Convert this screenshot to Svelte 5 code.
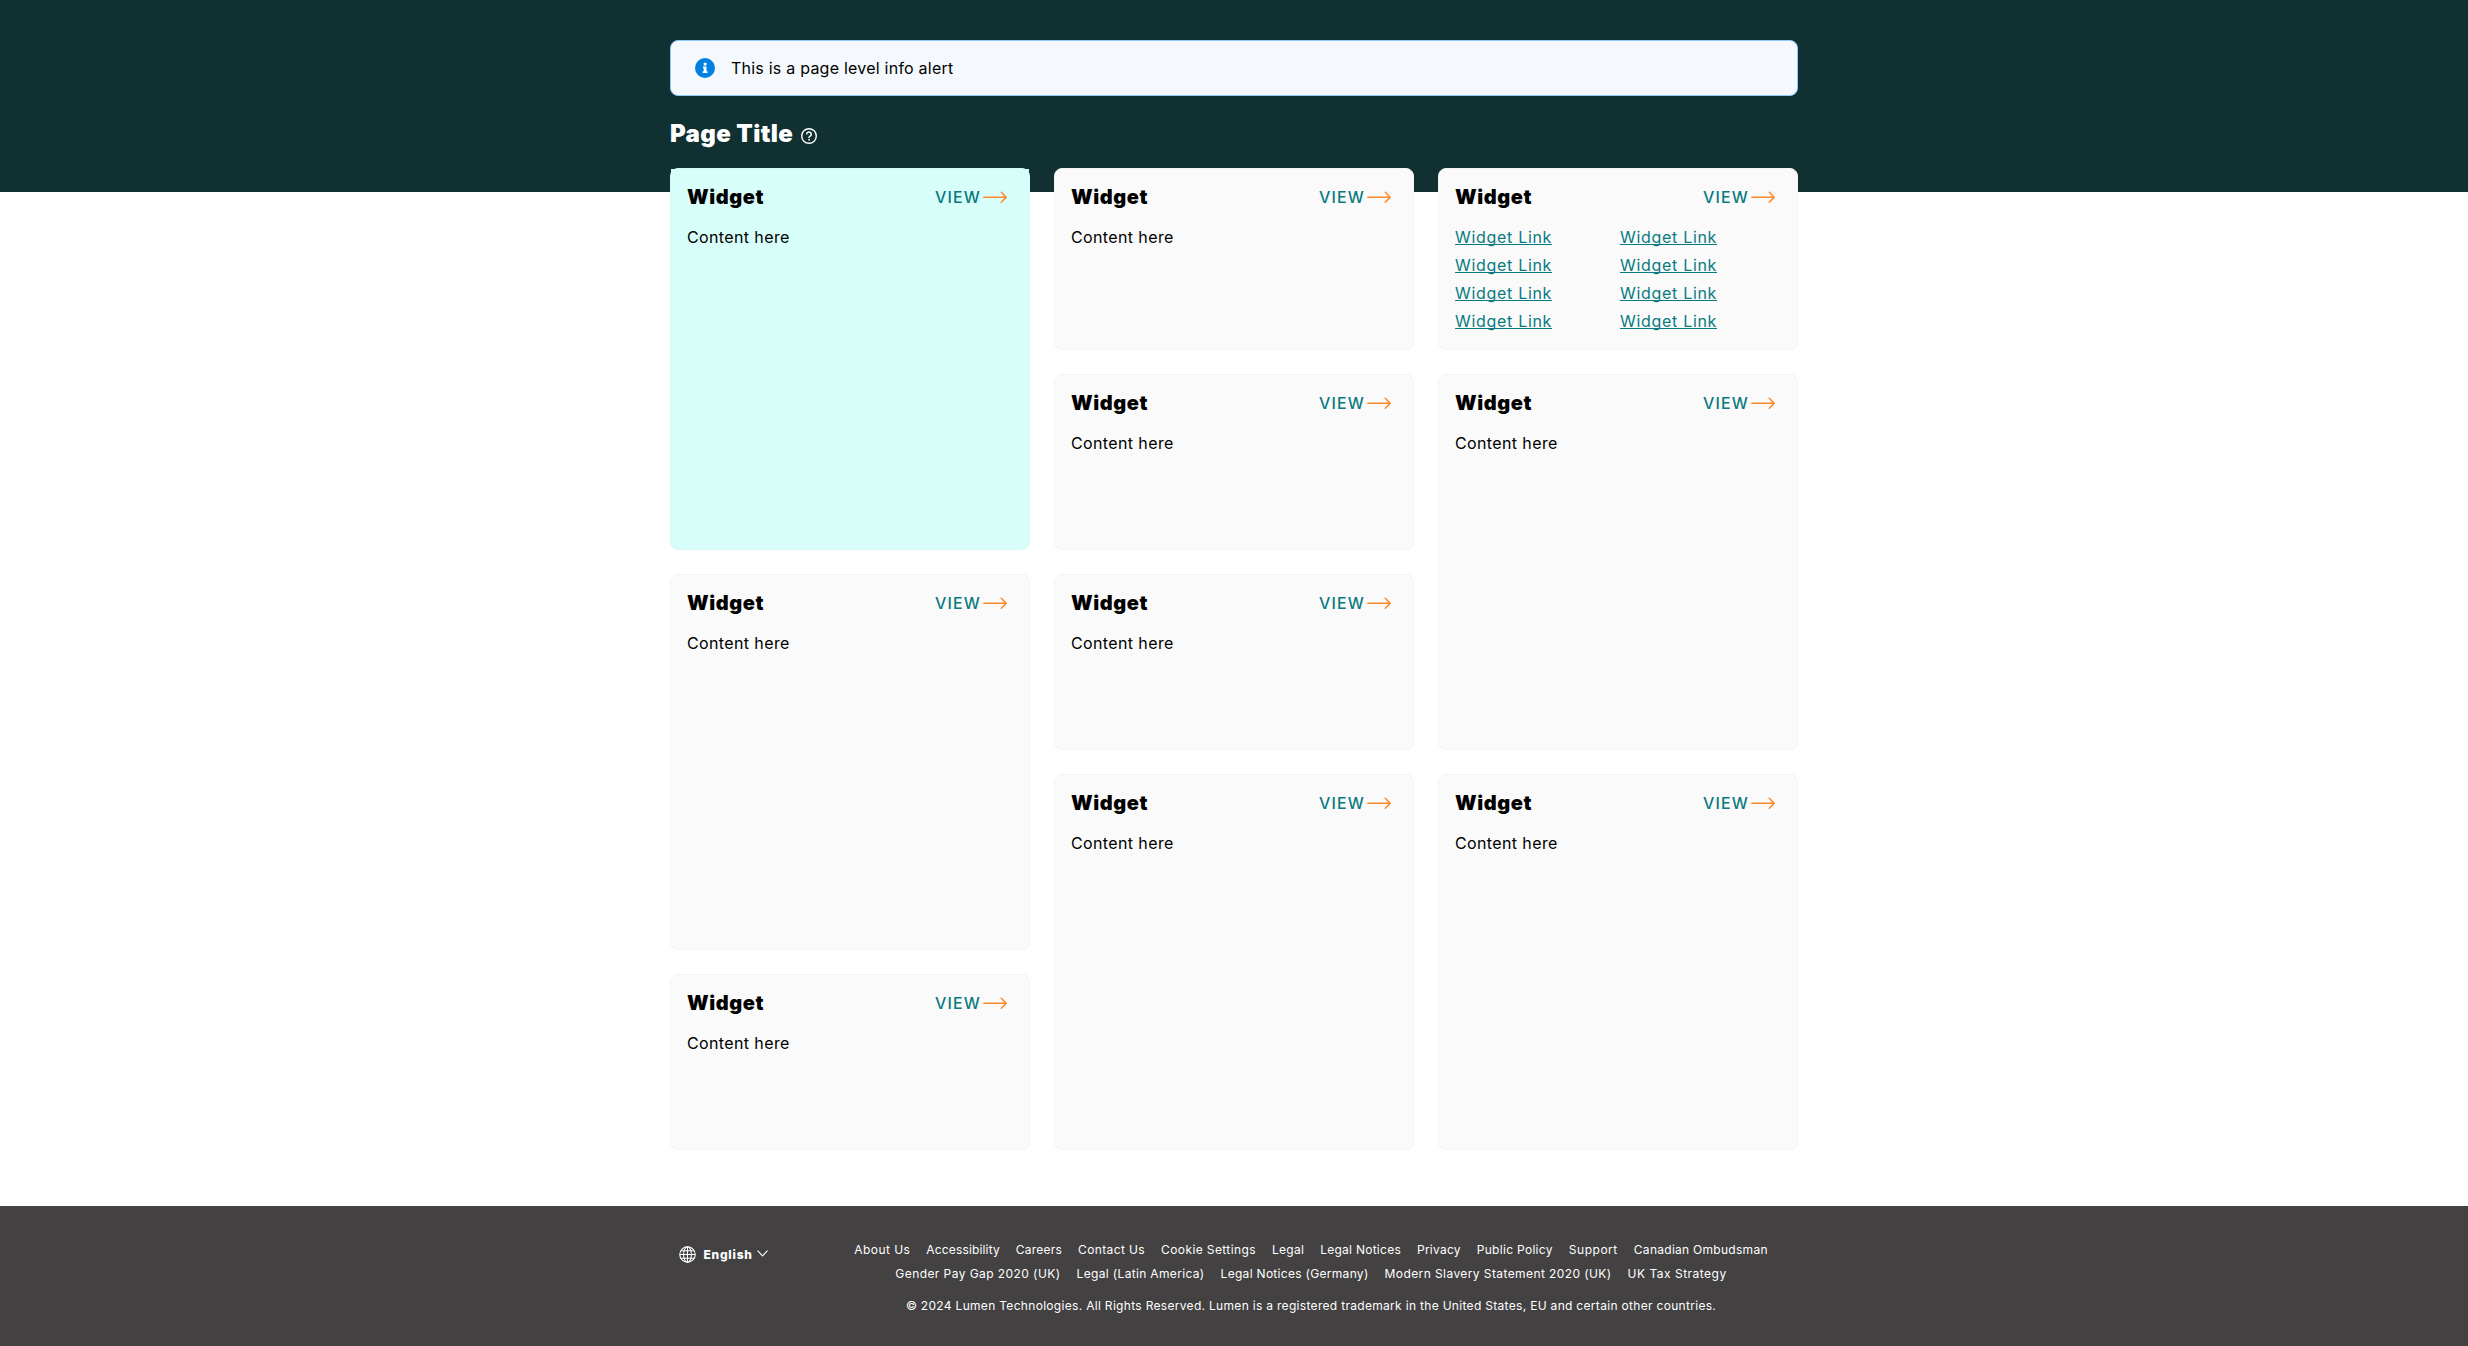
<script>
  const widgetLinks = Array.from({ length: 8 }, () => 'Widget Link');

  const columns = [
    [{ size: 'feature' }, { size: 'tall' }, { size: 'short' }],
    [{ size: 'top' }, { size: 'short' }, { size: 'short' }, { size: 'tall' }],
    [{ size: 'top', links: widgetLinks }, { size: 'tall' }, { size: 'tall' }]
  ];

  // label and its tracking in px
  const footerLinks = [
    ['About Us', 0.46],
    ['Accessibility', 0.15],
    ['Careers', 0.21],
    ['Contact Us', 0.39],
    ['Cookie Settings', 0.39],
    ['Legal', 0.3],
    ['Legal Notices', 0.26],
    ['Privacy', 0.24],
    ['Public Policy', 0.3],
    ['Support', 0.53],
    ['Canadian Ombudsman', 0.28],
    ['Gender Pay Gap 2020 (UK)', 0.43],
    ['Legal (Latin America)', 0.34],
    ['Legal Notices (Germany)', 0.3],
    ['Modern Slavery Statement 2020 (UK)', 0.41],
    ['UK Tax Strategy', 0.49]
  ];
</script>

<div class="page">
  <header class="banner">
    <div class="container">
      <div class="alert" role="status">
        <svg class="info" viewBox="0 0 20 20" width="20" height="20" aria-hidden="true">
          <circle cx="10" cy="10" r="10" fill="#0280e1" />
          <circle cx="10.1" cy="6.1" r="1.6" fill="#fff" />
          <path d="M8 8.5h3.5v4.7h1v1.7H7.7v-1.7h1V10.2H8z" fill="#fff" />
        </svg>
        <span>This is a page level info alert</span>
      </div>
      <div class="title-row">
        <h1>Page Title</h1>
        <svg class="help" viewBox="0 0 16 16" width="16" height="16" fill="none" stroke="#fff" aria-hidden="true">
          <circle cx="8" cy="8" r="7.3" stroke-width="1.4" />
          <path d="M5.7 6.4a2.3 2.2 0 1 1 3.7 1.6C8.6 8.6 8 8.9 8 9.9" stroke-width="1.5" />
          <path d="M8 11v1.6" stroke-width="1.6" />
        </svg>
      </div>
    </div>
  </header>

  <main class="container board">
    {#each columns as column}
      <div class="column">
        {#each column as widget}
          <section class="card {widget.size}">
            <div class="card-body">
              <div class="card-head">
                <h2>Widget</h2>
                <a class="view" href="#view">
                  <span>VIEW</span>
                  <svg viewBox="0 0 24 12" width="24" height="12" fill="none" stroke="#ff8a2c" stroke-width="1.5" stroke-linecap="round" stroke-linejoin="round" aria-hidden="true">
                    <path d="M.8 6.3h22.3M18.3 1.2l4.9 5.1-4.9 5" />
                  </svg>
                </a>
              </div>
              {#if widget.links}
                <div class="links">
                  {#each widget.links as link}
                    <a href="#link">{link}</a>
                  {/each}
                </div>
              {:else}
                <p>Content here</p>
              {/if}
            </div>
          </section>
        {/each}
      </div>
    {/each}
  </main>

  <footer>
    <div class="container footer-grid">
      <button class="language" type="button">
        <svg viewBox="0 0 16 16" width="17" height="17" fill="none" stroke="#fff" stroke-width="1" aria-hidden="true">
          <circle cx="8" cy="8" r="7.3" />
          <ellipse cx="8" cy="8" rx="3.7" ry="7.3" />
          <path d="M8 .7v14.6M.7 8h14.6M1.8 4.4h12.4M1.8 11.6h12.4" />
        </svg>
        <span>English</span>
        <svg class="chevron" viewBox="0 0 11 7" width="11" height="7" fill="none" stroke="#fff" stroke-width="1.1" stroke-linecap="round" aria-hidden="true">
          <path d="M.8 .9l4.7 5 4.7-5" />
        </svg>
      </button>
      <div class="legal">
        <nav>
          {#each footerLinks as [label, tracking]}
            <a href="#legal" style:letter-spacing="{tracking}px">{label}</a>
          {/each}
        </nav>
        <p>© 2024 Lumen Technologies. All Rights Reserved. Lumen is a registered trademark in the United States, EU and certain other countries.</p>
      </div>
    </div>
  </footer>
</div>

<style>
  :global(body) {
    background: #fff;
  }
  .page {
    display: flex;
    flex-direction: column;
    min-height: 1346px;
    font-family: Inter, 'Liberation Sans', sans-serif;
    font-size: 16px;
    line-height: 24px;
    color: #000;
  }
  .page * {
    box-sizing: border-box;
  }
  h1, h2, p {
    margin: 0;
  }
  .container {
    width: 1128px;
    margin: 0 auto;
  }
  .banner {
    height: 192px;
    padding-top: 40px;
    background: #103032;
  }
  .alert {
    display: flex;
    align-items: center;
    height: 56px;
    padding: 0 24px;
    border: 1px solid #8ccbf8;
    border-radius: 8px;
    background: #f5f9fd;
    letter-spacing: 0.23px;
  }
  .info {
    margin-right: 16px;
  }
  .title-row {
    display: flex;
    align-items: center;
    gap: 8px;
    margin-top: 26px;
    color: #fff;
  }
  h1 {
    font-size: 24px;
    line-height: 24px;
    font-weight: 900;
    letter-spacing: 0.4px;
  }
  .help {
    margin-top: 4px;
  }
  .board {
    display: grid;
    grid-template-columns: repeat(3, 360px);
    gap: 24px;
    margin-top: -24px;
    margin-bottom: 56px;
  }
  .column {
    display: flex;
    flex-direction: column;
    gap: 24px;
  }
  .card {
    border: 1px solid #f4f4f4;
    border-radius: 8px;
    background: #fafafa;
  }
  .top {
    height: 182px;
  }
  .short {
    height: 176px;
  }
  .tall {
    height: 376px;
  }
  .feature {
    height: 382px;
    border-color: #d6f7f6;
    background: #d8fefa;
  }
  .card-body {
    height: 100%;
    padding: 16px 22px 0 16px;
    border-radius: 0 0 7px 7px;
  }
  .feature .card-body {
    background: #d8fefa;
  }
  .card-head {
    display: flex;
    align-items: center;
    justify-content: space-between;
    margin-bottom: 16px;
  }
  h2 {
    font-size: 20px;
    line-height: 24px;
    font-weight: 900;
    letter-spacing: 0.6px;
  }
  .view {
    display: flex;
    align-items: center;
    gap: 2px;
    color: #087a80;
    font-weight: 500;
    letter-spacing: 1.15px;
    text-decoration: none;
  }
  .card p {
    letter-spacing: 0.38px;
  }
  .links {
    display: grid;
    grid-template-columns: 165px 1fr;
    row-gap: 4px;
    justify-items: start;
    letter-spacing: 0.69px;
  }
  .links a {
    color: #087a80;
    text-decoration: underline;
    text-decoration-skip-ink: none;
    text-decoration-thickness: 1px;
    text-underline-offset: 1px;
  }
  footer {
    flex: 1;
    padding-top: 32px;
    background: #434142;
    color: #fff;
    font-size: 12px;
  }
  .footer-grid {
    display: grid;
    grid-template-columns: 154px 974px;
  }
  .language {
    display: flex;
    align-items: center;
    align-self: start;
    height: 24px;
    margin: 4px 0 0 8.5px;
    padding: 0;
    border: 0;
    background: none;
    color: #fff;
    font: 800 12px/24px Inter, 'Liberation Sans', sans-serif;
    letter-spacing: 0.75px;
  }
  .language span {
    margin: 1px 4px 0 8px;
  }
  .chevron {
    margin-top: -2px;
  }
  nav {
    display: flex;
    flex-wrap: wrap;
    justify-content: center;
    column-gap: 16px;
  }
  nav a {
    color: #fff;
    text-decoration: none;
  }
  .legal p {
    margin-top: 8px;
    text-align: center;
    letter-spacing: 0.31px;
  }
</style>
